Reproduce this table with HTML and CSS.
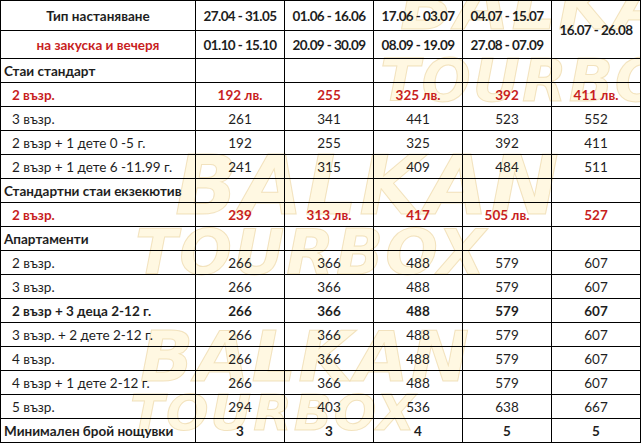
FILE: index.html
```html
<!DOCTYPE html>
<html lang="bg">
<head>
<meta charset="utf-8">
<title>Цени</title>
<link rel="stylesheet" href="styles.css">
</head>
<body>
<div class="sheet">
  <div class="watermark" aria-hidden="true">
    <div class="wm wm-a1">BALKAN</div>
    <div class="wm wm-a2">TOURBOX</div>
    <div class="wm wm-b1">BALKAN</div>
    <div class="wm wm-b2">TOURBOX</div>
    <div class="wm wm-c1">BALKAN</div>
    <div class="wm wm-c2">TOURBOX</div>
  </div>
  <table class="prices">
    <colgroup>
      <col class="c-name"><col class="c-p"><col class="c-p"><col class="c-p"><col class="c-p"><col class="c-p">
    </colgroup>
    <tr class="head">
      <td class="b center">Тип настаняване</td>
      <td class="b date">27.04 - 31.05</td>
      <td class="b date">01.06 - 16.06</td>
      <td class="b date">17.06 - 03.07</td>
      <td class="b date">04.07 - 15.07</td>
      <td class="b date" rowspan="2">16.07 - 26.08</td>
    </tr>
    <tr class="head2">
      <td class="b red center">на закуска и вечеря</td>
      <td class="b date">01.10 - 15.10</td>
      <td class="b date">20.09 - 30.09</td>
      <td class="b date">08.09 - 19.09</td>
      <td class="b date">27.08 - 07.09</td>
    </tr>
    <tr><td class="sec b">Стаи стандарт</td><td></td><td></td><td></td><td></td><td></td></tr>
    <tr class="red b"><td class="sub">2 възр.</td><td>192 лв.</td><td>255</td><td>325 лв.</td><td>392</td><td>411 лв.</td></tr>
    <tr><td class="sub">3 възр.</td><td>261</td><td>341</td><td>441</td><td>523</td><td>552</td></tr>
    <tr><td class="sub">2 възр + 1 дете 0 -5 г.</td><td>192</td><td>255</td><td>325</td><td>392</td><td>411</td></tr>
    <tr><td class="sub">2 възр + 1 дете 6 -11.99 г.</td><td>241</td><td>315</td><td>409</td><td>484</td><td>511</td></tr>
    <tr><td class="sec b">Стандартни стаи екзекютив</td><td></td><td></td><td></td><td></td><td></td></tr>
    <tr class="red b"><td class="sub">2 възр.</td><td>239</td><td>313 лв.</td><td>417</td><td>505 лв.</td><td>527</td></tr>
    <tr><td class="sec b">Апартаменти</td><td></td><td></td><td></td><td></td><td></td></tr>
    <tr><td class="sub">2 възр.</td><td>266</td><td>366</td><td>488</td><td>579</td><td>607</td></tr>
    <tr><td class="sub">3 възр.</td><td>266</td><td>366</td><td>488</td><td>579</td><td>607</td></tr>
    <tr class="b"><td class="sub">2 възр + 3 деца 2-12 г.</td><td>266</td><td>366</td><td>488</td><td>579</td><td>607</td></tr>
    <tr><td class="sub">3 възр. + 2 дете 2-12 г.</td><td>266</td><td>366</td><td>488</td><td>579</td><td>607</td></tr>
    <tr><td class="sub">4 възр.</td><td>266</td><td>366</td><td>488</td><td>579</td><td>607</td></tr>
    <tr><td class="sub">4 възр + 1 дете 2-12 г.</td><td>266</td><td>366</td><td>488</td><td>579</td><td>607</td></tr>
    <tr><td class="sub">5 възр.</td><td>294</td><td>403</td><td>536</td><td>638</td><td>667</td></tr>
    <tr class="b"><td class="sec">Минимален брой нощувки</td><td>3</td><td>3</td><td>4</td><td>5</td><td>5</td></tr>
  </table>
</div>
</body>
</html>
```
FILE: styles.css
```css
html, body {
  margin: 0;
  padding: 0;
  background: #ffffff;
}

.sheet {
  position: relative;
  width: 641px;
  font-family: Lato, "Open Sans", "Liberation Sans", sans-serif;
  font-size: 13.5px;
  color: #1e1e1e;
}

.watermark {
  position: absolute;
  inset: 0;
  z-index: 0;
  overflow: hidden;
  pointer-events: none;
}

.wm {
  position: absolute;
  font-family: "DejaVu Sans", sans-serif;
  font-weight: bold;
  font-style: italic;
  color: #fff8e2;
  -webkit-text-stroke: 1px rgba(232, 205, 150, 0.55);
  letter-spacing: 2px;
  line-height: 1;
  white-space: nowrap;
}

.wm-a1 { left: 400px; top: -30px; font-size: 70px; }
.wm-a2 { left: 380px; top: 52px; font-size: 58px; }
.wm-b1 { left: 175px; top: 145px; font-size: 82px; }
.wm-b2 { left: 135px; top: 222px; font-size: 62px; }
.wm-c1 { left: 140px; top: 322px; font-size: 70px; }
.wm-c2 { left: 130px; top: 388px; font-size: 50px; }

.prices {
  position: relative;
  z-index: 1;
  border-collapse: collapse;
  table-layout: fixed;
  width: 641px;
}

.c-name { width: 195px; }
.c-p { width: 89px; }

.prices tr { height: 24px; }
.prices tr.head { height: 30px; }
.prices tr.head2 { height: 28px; }

.prices td {
  border: 1px solid #000000;
  padding: 0;
  text-align: center;
  vertical-align: middle;
  line-height: 16px;
  white-space: nowrap;
}

.prices td.date { letter-spacing: -0.6px; }

.prices td.sec {
  text-align: left;
  padding-left: 3px;
}

.prices td.sub {
  text-align: left;
  padding-left: 11px;
}

.prices td.center { text-align: center; }

.b, .b td { font-weight: bold; }
.red, .red td { color: #c81e1e; }
```
